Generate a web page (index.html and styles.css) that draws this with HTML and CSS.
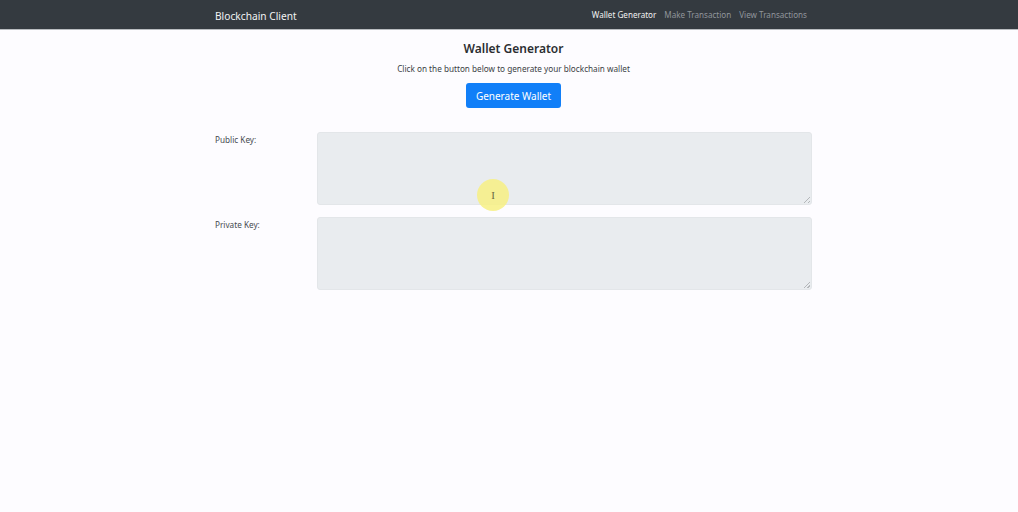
FILE: index.html
```html
<!DOCTYPE html>
<html lang="en">
<head>
<meta charset="utf-8">
<title>Blockchain Client</title>
<link rel="stylesheet" href="styles.css">
</head>
<body>
<nav class="navbar">
  <div class="container nav-inner">
    <a class="brand" href="#">Blockchain Client</a>
    <ul class="nav-links">
      <li><a class="nav-link active" href="#">Wallet Generator</a></li>
      <li><a class="nav-link" href="#">Make Transaction</a></li>
      <li><a class="nav-link" href="#">View Transactions</a></li>
    </ul>
  </div>
</nav>
<main class="container">
  <section class="intro">
    <h1 class="title">Wallet Generator</h1>
    <p class="lead">Click on the button below to generate your blockchain wallet</p>
    <button class="btn-primary" type="button">Generate Wallet</button>
  </section>
  <section class="keys">
    <div class="row">
      <label class="key-label">Public Key:</label>
      <div class="field">
        <textarea class="key-box" readonly></textarea>
        <div class="cursor-spot"><span class="ibeam">I</span></div>
      </div>
    </div>
    <div class="row">
      <label class="key-label">Private Key:</label>
      <div class="field">
        <textarea class="key-box" readonly></textarea>
      </div>
    </div>
  </section>
</main>
</body>
</html>
```

FILE: styles.css
```css
* { box-sizing: border-box; }
html, body { margin: 0; padding: 0; }
body {
  background: #fdfcff;
  font-family: "Noto Sans", "Open Sans", "Liberation Sans", sans-serif;
  color: #212529;
  width: 1018px;
  height: 512px;
  overflow: hidden;
}
.container {
  width: 597px;
  margin: 0 0 0 215px;
}
.navbar {
  background: #343a40;
  height: 30px;
  border-bottom: 1px solid #b9bcc0;
}
.nav-inner {
  display: flex;
  align-items: center;
  justify-content: space-between;
  height: 29px;
}
.brand {
  color: #f2f3f4;
  text-decoration: none;
  font-size: 10.2px;
  line-height: 12px;
  margin-top: 2px;
}
.nav-links {
  display: flex;
  align-items: center;
  list-style: none;
  margin: 0 5px 0 0;
  padding: 0;
  gap: 8px;
}
.nav-links li {
  display: flex;
  line-height: 10px;
}
.nav-link {
  color: #90959b;
  text-decoration: none;
  font-size: 8.1px;
  line-height: 10px;
}
.nav-link.active { color: #f0f1f2; }

.intro {
  display: flex;
  flex-direction: column;
  align-items: center;
  padding-top: 10px;
}
.title {
  margin: 0;
  font-size: 12px;
  font-weight: 600;
  color: #2b2e31;
  line-height: 18px;
}
.lead {
  margin: 5px 0 0;
  font-size: 8.2px;
  color: #3b3f44;
  line-height: 12px;
}
.btn-primary {
  margin-top: 8px;
  width: 95px;
  height: 25px;
  border: none;
  border-radius: 3px;
  background: #117ff8;
  color: #fff;
  font-family: inherit;
  font-size: 10px;
  padding: 0;
}
.keys {
  margin-top: 24px;
  display: flex;
  flex-direction: column;
  gap: 12px;
}
.row {
  display: grid;
  grid-template-columns: 102px 1fr;
}
.key-label {
  font-size: 8.2px;
  color: #474b50;
  padding-top: 3px;
  line-height: 10px;
}
.field { position: relative; }
.field::after {
  content: "";
  position: absolute;
  right: 2px;
  bottom: 2px;
  width: 6px;
  height: 6px;
  background: linear-gradient(135deg, transparent 45%, #b4b7ba 45%, #b4b7ba 55%, transparent 55%, transparent 75%, #b4b7ba 75%, #b4b7ba 85%, transparent 85%);
}
.key-box {
  display: block;
  width: 495px;
  height: 73px;
  background: #e9ecef;
  border: 1px solid #e3e6e9;
  border-radius: 3px;
  resize: none;
  margin: 0;
}
.cursor-spot {
  position: absolute;
  left: 160px;
  top: 47px;
  width: 32px;
  height: 32px;
  border-radius: 50%;
  background: rgba(247, 240, 130, 0.85);
  display: flex;
  align-items: center;
  justify-content: center;
}
.ibeam {
  font-family: "Liberation Serif", serif;
  font-size: 11px;
  color: #6b6a45;
  line-height: 1;
}
```
